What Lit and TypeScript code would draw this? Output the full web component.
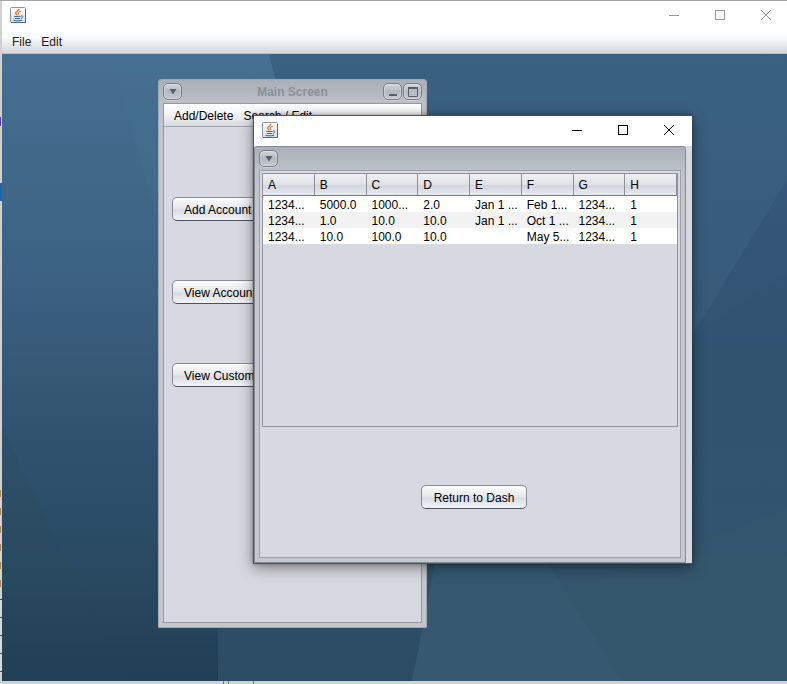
import { LitElement, html, css, svg } from "lit";
import { customElement, property } from "lit/decorators.js";

const FONT = css`"Liberation Sans", Arial, sans-serif`;

@customElement("java-icon")
class JavaIcon extends LitElement {
  static styles = css`
    :host { display: block; width: 16px; height: 16px; flex: none; }
    svg { display: block; }
  `;
  render() {
    return html`<svg width="16" height="16" viewBox="0 0 16 16" fill="none" aria-hidden="true">
      <defs>
        <linearGradient id="g" x1="0" y1="0" x2="0" y2="1">
          <stop offset="0" stop-color="#ffffff" />
          <stop offset="1" stop-color="#d3dce5" />
        </linearGradient>
      </defs>
      <rect x=".5" y=".5" width="15" height="15" rx="1" fill="url(#g)" stroke="#8496a8" />
      <path d="M1 15.5H15.5V2" stroke="#4d6a87" />
      <path d="M8.8 1.8C9.4 3.6 5.4 4.2 5.6 6.2C5.7 7 7 7.4 7.2 8.4" stroke="#e0752a" stroke-width="1.3" />
      <path d="M10.8 4.2C9 4.7 7.6 5.5 8.4 6.6C8.8 7.2 8.7 7.6 8.2 8.4" stroke="#e58a45" stroke-width="1.1" />
      <path d="M4.2 9.5H10.6M5 11.5H10M3.6 13.2C6 13.9 9.8 13.9 12 12.9" stroke="#3f6c92" stroke-width="1.1" />
      <path d="M11 9C13.8 8.2 13.4 10.8 10.9 11.4" stroke="#4b7698" />
    </svg>`;
  }
}

@customElement("window-controls")
class WindowControls extends LitElement {
  static styles = css`
    :host { display: flex; color: #000; }
    :host([inactive]) { color: #999; }
    button {
      width: 46px; height: 28px; padding: 0; border: 0; background: none; color: inherit;
      display: flex; align-items: center; justify-content: center;
    }
    svg { display: block; }
  `;
  render() {
    const button = (label: string, d: string, crisp = true) => html`
      <button type="button" aria-label=${label}>
        <svg width="10" height="10" viewBox="0 0 10 10" fill="none" stroke="currentColor"
          shape-rendering=${crisp ? "crispEdges" : "auto"}><path d=${d} /></svg>
      </button>`;
    return html`
      ${button("Minimize", "M0 5.5H10")}
      ${button("Maximize", "M.5 .5H9.5V9.5H.5Z")}
      ${button("Close", "M0 0L10 10M10 0L0 10", false)}`;
  }
}

@customElement("frame-button")
class FrameButton extends LitElement {
  @property() kind = "menu";
  static styles = css`
    :host { display: block; }
    button {
      display: flex; align-items: center; justify-content: center;
      width: 19px; height: 17px; padding: 0; box-sizing: border-box;
      border: 1px solid #777d88; border-radius: 5px;
      background: linear-gradient(#d3d6dc, #b4b8c1 50%, #c5c9d1);
      box-shadow: inset 0 0 0 1px #ffffff40, 0 1px #ffffff50;
    }
    svg { display: block; }
  `;
  render() {
    const shapes: Record<string, unknown> = {
      menu: svg`<path d="M2.5 3H9.5L6 8.5Z" fill="#585d66" />`,
      minimize: svg`<path d="M2 9H10" stroke="#585d66" stroke-width="2" />`,
      maximize: svg`<path d="M1.5 2H10.5V10.5H1.5Z" fill="none" stroke="#585d66" /><path d="M1 2H11" stroke="#585d66" stroke-width="2" />`,
    };
    return html`<button type="button" aria-label=${this.kind}>
      <svg width="12" height="12" viewBox="0 0 12 12">${shapes[this.kind]}</svg>
    </button>`;
  }
}

@customElement("main-frame")
class MainFrame extends LitElement {
  static styles = css`
    :host {
      display: flex; flex-direction: column; box-sizing: border-box;
      padding: 0 4px 4px; border: 1px solid #a3a8b2; border-radius: 3px 3px 1px 1px;
      background: linear-gradient(#aaaeb7, #bdc1c9 24px, #c4c7ce 60px);
      font: 12px/16px ${FONT}; color: #000;
    }
    .title { display: flex; align-items: center; height: 23px; gap: 1px; }
    h1 { flex: 1; margin: 0; padding-left: 20px; text-align: center; font: bold 12px/16px ${FONT}; color: #8c9098; }
    .pane { flex: 1; border: 1px solid #9499a3; background: #d6d9e0; }
    .menu {
      display: flex; gap: 10px; padding: 4px 10px 2px; border-bottom: 1px solid #a2a6af;
      background: linear-gradient(#fff, #f2f3f5 45%, #d8dbe1);
    }
    .menu button { border: 0; padding: 0; background: none; font: inherit; }
    .actions { display: flex; flex-direction: column; align-items: flex-start; gap: 59px; padding: 70px 8px; }
    .push {
      height: 24px; padding: 2px 11px 0; border: 1px solid #888c95; border-bottom-color: #4c515b; border-radius: 5px;
      background: linear-gradient(#fbfcfc, #e4e6eb 50%, #d8dbe2 55%, #f2f4f8);
      font: inherit; color: #000;
    }
  `;
  render() {
    return html`
      <div class="title">
        <frame-button kind="menu"></frame-button>
        <h1>Main Screen</h1>
        <frame-button kind="minimize"></frame-button>
        <frame-button kind="maximize"></frame-button>
      </div>
      <div class="pane">
        <nav class="menu">
          <button type="button">Add/Delete</button>
          <button type="button">Search / Edit</button>
        </nav>
        <div class="actions">
          <button class="push" type="button">Add Account</button>
          <button class="push" type="button">View Accounts</button>
          <button class="push" type="button">View Customers</button>
        </div>
      </div>`;
  }
}

const COLUMNS = ["A", "B", "C", "D", "E", "F", "G", "H"];
const ROWS = [
  ["1234...", "5000.0", "1000...", "2.0", "Jan 1 ...", "Feb 1...", "1234...", "1"],
  ["1234...", "1.0", "10.0", "10.0", "Jan 1 ...", "Oct 1 ...", "1234...", "1"],
  ["1234...", "10.0", "100.0", "10.0", "", "May 5...", "1234...", "1"],
];

@customElement("account-window")
class AccountWindow extends LitElement {
  static styles = css`
    :host {
      display: flex; flex-direction: column; box-sizing: border-box;
      border: 1px solid #45525f; border-right: 0; background: #d6d9e0;
      box-shadow: 0 4px 14px #00000066, 0 0 4px #00000050;
      font: 12px/16px ${FONT}; color: #000;
    }
    .bar { display: flex; align-items: flex-start; justify-content: space-between; height: 30px; padding-left: 8px; background: #fff; }
    .bar java-icon { margin-top: 6px; }
    .frame {
      flex: 1; display: flex; flex-direction: column; margin-right: 6px; padding: 0 4px 4px;
      border: 1px solid #858b96; border-radius: 3px 3px 0 0;
      background: linear-gradient(#abafb8, #bdc1c9 24px, #c4c7ce 60px);
    }
    .title { display: flex; align-items: center; height: 23px; }
    .pane {
      flex: 1; display: flex; flex-direction: column; align-items: center;
      padding: 2px 2px 48px; border: 1px solid #9ba0aa; background: #d6d9e0;
    }
    .scroll { align-self: stretch; height: 252px; margin-bottom: 58px; border: 1px solid #8e939d; overflow: hidden; }
    table { width: 100%; table-layout: fixed; border-collapse: separate; border-spacing: 0; }
    th, td { text-align: left; font-weight: normal; padding: 0 0 0 5px; white-space: nowrap; overflow: hidden; }
    td { padding-top: 2px; line-height: 14px; background: #fff; }
    tr:nth-child(even) td { background: #f2f2f2; }
    th {
      height: 21px; border-right: 1px solid #8c929d; border-bottom: 1px solid #737983;
      background: linear-gradient(#eff0f3, #dfe2e7 50%, #d3d6de 55%, #e7eaf0);
    }
    .push {
      height: 24px; margin-left: 8px; padding: 2px 12px 0; border: 1px solid #888c95; border-bottom-color: #4c515b; border-radius: 5px;
      background: linear-gradient(#fbfcfc, #e4e6eb 50%, #d8dbe2 55%, #f2f4f8);
      font: inherit; color: #000;
    }
  `;
  render() {
    return html`
      <div class="bar"><java-icon></java-icon><window-controls></window-controls></div>
      <div class="frame">
        <div class="title"><frame-button kind="menu"></frame-button></div>
        <div class="pane">
          <div class="scroll">
            <table>
              <thead><tr>${COLUMNS.map((c) => html`<th scope="col">${c}</th>`)}</tr></thead>
              <tbody>${ROWS.map((r) => html`<tr>${r.map((v) => html`<td>${v}</td>`)}</tr>`)}</tbody>
            </table>
          </div>
          <button class="push" type="button">Return to Dash</button>
        </div>
      </div>`;
  }
}

@customElement("app-root")
class AppRoot extends LitElement {
  static styles = css`
    :host {
      display: flex; flex-direction: column; box-sizing: border-box; min-height: 100vh;
      padding: 1px 0 3px 2px; overflow: hidden;
      background:
        linear-gradient(#1768ad, #1768ad) 0 183px / 2px 18px no-repeat,
        linear-gradient(#5636b5, #5636b5) 0 117px / 1px 9px no-repeat,
        linear-gradient(#777, #777) 223px 100% / 1px 3px no-repeat,
        linear-gradient(#777, #777) 228px 100% / 1px 3px no-repeat,
        linear-gradient(#777, #777) 253px 100% / 1px 3px no-repeat,
        repeating-linear-gradient(#a18460 0 7px, #d5d6d3 7px 18px) 0 490px / 1px 100px no-repeat,
        repeating-linear-gradient(#444 0 1px, #d8dad8 1px 18px) 0 599px / 2px 74px no-repeat,
        linear-gradient(#a5a5a5, #a5a5a5) 0 0 / 100% 1px no-repeat,
        #d0d2d1;
      font: 12px/16px ${FONT}; color: #1c1c1c;
    }
    .bar { display: flex; align-items: flex-start; justify-content: space-between; height: 29px; padding-left: 8px; background: #fff; }
    .bar java-icon { margin-top: 6px; }
    .bar window-controls { margin-right: -2px; }
    .menu {
      display: flex; align-items: center; gap: 10px; height: 22px; padding: 1px 10px 0;
      border-bottom: 1px solid #b3c3d5; background: linear-gradient(#fff, #f8f9fb 35%, #d5d5dc);
    }
    .menu button { border: 0; padding: 0; background: none; font: inherit; color: inherit; }
    .desktop { position: relative; flex: 1; min-height: 600px; overflow: hidden; background: #34566f; }
    .wall { position: absolute; inset: 0; width: 100%; height: 100%; }
    main-frame { position: absolute; left: 156px; top: 25px; width: 269px; min-height: 549px; }
    account-window { position: absolute; left: 251px; top: 61px; width: 439px; min-height: 449px; }
  `;
  render() {
    return html`
      <header class="bar"><java-icon></java-icon><window-controls inactive></window-controls></header>
      <nav class="menu"><button type="button">File</button><button type="button">Edit</button></nav>
      <main class="desktop">
        <svg class="wall" viewBox="0 0 785 627" preserveAspectRatio="none" aria-hidden="true">
          <defs>
            <linearGradient id="left" x1="0" y1="0" x2="0" y2="1">
              <stop offset="0" stop-color="#466f91" />
              <stop offset=".3" stop-color="#3e6485" />
              <stop offset=".6" stop-color="#31536f" />
              <stop offset=".85" stop-color="#284860" />
              <stop offset="1" stop-color="#223e55" />
            </linearGradient>
            <linearGradient id="right" x1="0" y1="0" x2="0" y2="1">
              <stop offset="0" stop-color="#3a6082" />
              <stop offset=".4" stop-color="#385c7a" />
              <stop offset="1" stop-color="#2e4e68" />
            </linearGradient>
            <linearGradient id="side" x1="0" y1="0" x2="0" y2="1">
              <stop offset="0" stop-color="#33567a" />
              <stop offset=".4" stop-color="#30536f" />
              <stop offset="1" stop-color="#34566e" />
            </linearGradient>
            <linearGradient id="floor" x1="0" y1="0" x2="0" y2="1">
              <stop offset="0" stop-color="#30516b" />
              <stop offset="1" stop-color="#2c4b65" />
            </linearGradient>
          </defs>
          <rect width="785" height="627" fill="url(#right)" />
          <path d="M0 0H267L290 90L340 500L216 520V627H0Z" fill="url(#left)" />
          <path d="M107 0H267L290 90L160 180Z" fill="#4e7a9c" opacity=".12" />
          <path d="M0 370L50 480L130 627H0Z" fill="#2a4a50" opacity=".15" />
          <path d="M216 500H500V627H216Z" fill="url(#floor)" />
          <path d="M785 126L690 282L600 420V627H785Z" fill="url(#side)" />
          <path d="M690 282L785 220V126Z" fill="#3a5c80" opacity=".15" />
          <path d="M435 500H785V627H410Z" fill="#34566e" />
          <path d="M435 500H540L620 627H410Z" fill="#3c5f78" opacity=".35" />
          <path d="M785 455V627H620L560 540Z" fill="#38586c" opacity=".3" />
        </svg>
        <main-frame></main-frame>
        <account-window></account-window>
      </main>`;
  }
}
